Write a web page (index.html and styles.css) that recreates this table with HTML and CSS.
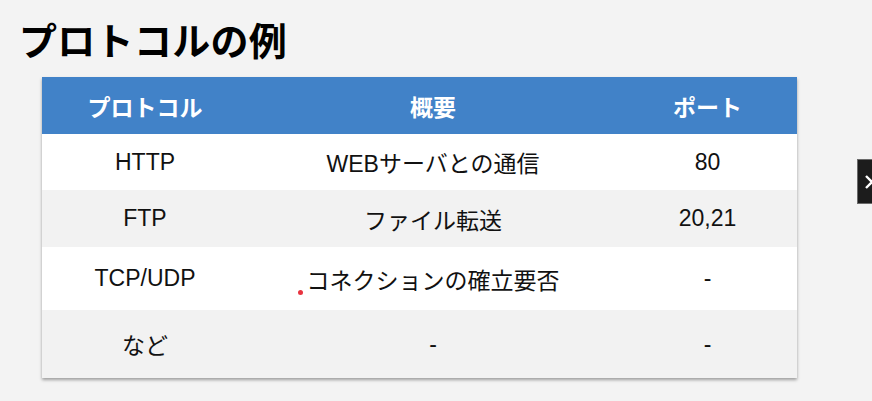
FILE: index.html
```html
<!DOCTYPE html>
<html lang="ja">
<head>
<meta charset="utf-8">
<link rel="stylesheet" href="styles.css">
</head>
<body>
<div class="page">
  <h1 class="title">プロトコルの例</h1>
  <div class="table-wrap">
    <table class="proto">
      <thead>
        <tr><th class="c1">プロトコル</th><th class="c2">概要</th><th class="c3">ポート</th></tr>
      </thead>
      <tbody>
        <tr class="r1"><td>HTTP</td><td>WEBサーバとの通信</td><td>80</td></tr>
        <tr class="r2 alt"><td>FTP</td><td>ファイル転送</td><td>20,21</td></tr>
        <tr class="r3"><td>TCP/UDP</td><td>コネクションの確立要否</td><td>-</td></tr>
        <tr class="r4 alt"><td>など</td><td>-</td><td>-</td></tr>
      </tbody>
    </table>
    <span class="dot"></span>
  </div>
  <div class="side-btn">
    <svg width="20" height="20" viewBox="0 0 20 20"><path d="M4 4 L16 16 M16 4 L4 16" stroke="#fff" stroke-width="2.4" fill="none"/></svg>
  </div>
</div>
</body>
</html>
```
FILE: styles.css
```css
html, body {
  margin: 0;
  padding: 0;
  background: #f3f3f3;
}
.page {
  position: relative;
  width: 872px;
  height: 401px;
  overflow: hidden;
  font-family: "Liberation Sans", "Noto Sans CJK JP", sans-serif;
  color: #111;
}
.title {
  margin: 0;
  padding: 17px 0 0 19px;
  font-family: "Noto Sans CJK JP", sans-serif;
  font-size: 38px;
  line-height: 44px;
  font-weight: 700;
  color: #000;
  letter-spacing: 0.3px;
}
.table-wrap {
  position: relative;
  margin: 16px 0 0 42px;
  width: 755px;
  box-shadow: 0 2px 3px rgba(0,0,0,0.35);
}
.proto {
  width: 755px;
  border-collapse: collapse;
  table-layout: fixed;
}
.proto th {
  background: #4182c8;
  color: #fff;
  font-size: 23px;
  font-weight: 700;
  height: 57px;
  padding: 0;
  text-align: center;
}
.c1 { width: 206px; }
.c2 { width: 370px; }
.c3 { width: 179px; }
.proto td {
  text-align: center;
  font-size: 23px;
  padding: 0;
  background: #fff;
  color: #111;
}
.proto tr.alt td { background: #f2f2f2; }
.r1 td { height: 56px; }
.r2 td { height: 57px; }
.r3 td { height: 63px; }
.r4 td { height: 68px; }
.dot {
  position: absolute;
  left: 256px;
  top: 213px;
  width: 5px;
  height: 5px;
  border-radius: 50%;
  background: #e8333f;
}
.side-btn {
  position: absolute;
  left: 857px;
  top: 159px;
  width: 30px;
  height: 45px;
  background: #1c1c1c;
  border: 1px solid #6a6a6a;
  display: flex;
  align-items: center;
  padding-left: 4px;
  box-sizing: border-box;
}
```
